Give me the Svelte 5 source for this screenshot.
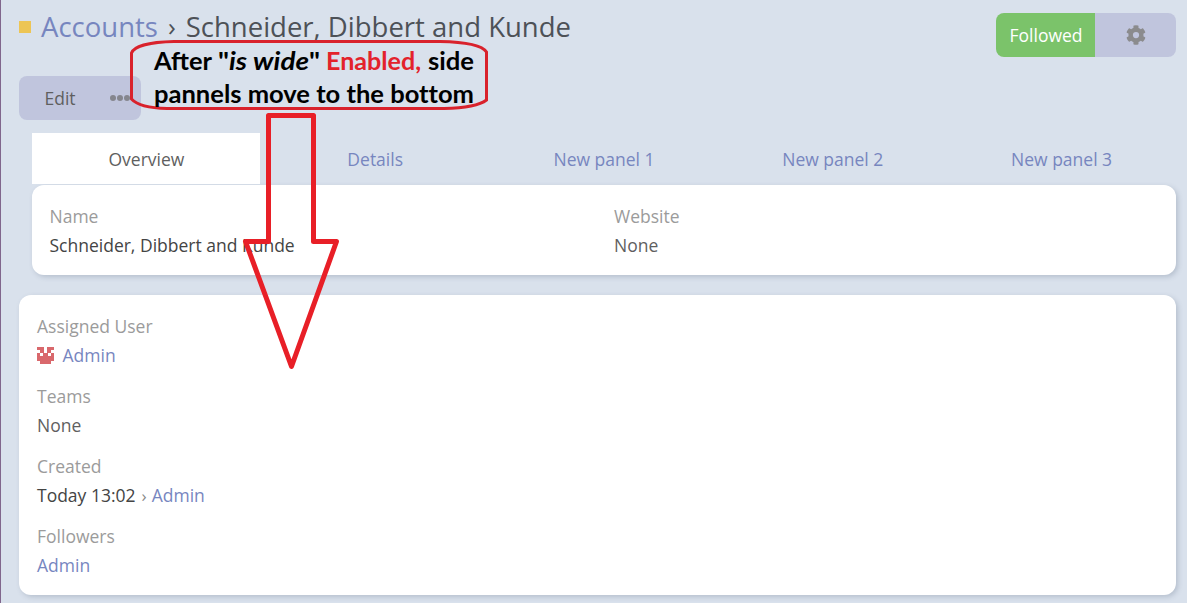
<script>
  const tabs = ['Overview', 'Details', 'New panel 1', 'New panel 2', 'New panel 3'];
  const avatar = [
    [0, 0, 7, 3], [10, 0, 7, 3], [3, 3, 4, 3], [10, 3, 4, 3],
    [0, 6, 3, 3], [6, 6, 5, 3], [14, 6, 3, 3], [0, 9, 17, 5], [3, 14, 11, 3]
  ];
</script>

<main>
  <header>
    <h1><i class="square"></i><a>Accounts</a><span class="chev">›</span><span class="title">Schneider, Dibbert and Kunde</span></h1>
    <div class="follow">
      <button class="followed"><span>Followed</span></button>
      <button class="gear" aria-label="Settings">
        <svg width="20" height="20" viewBox="0 0 512 512"><path fill="#8b8b8d" d="M487 316l-43-25a194 194 0 0 0 0-70l43-25c5-3 7-9 6-14-11-36-30-69-55-95-4-4-10-5-15-3l-43 25a191 191 0 0 0-60-35V24c0-6-4-11-10-12a246 246 0 0 0-110 0c-6 1-10 6-10 12v50a194 194 0 0 0-60 35L87 84c-5-3-11-2-15 3-25 26-44 59-55 95-2 5 1 11 6 14l43 25a194 194 0 0 0 0 70l-43 25c-5 3-7 9-6 14 11 36 30 69 55 95 4 4 10 5 15 3l43-25a191 191 0 0 0 60 35v50c0 6 4 11 10 12a246 246 0 0 0 110 0c6-1 10-6 10-12v-50a194 194 0 0 0 60-35l43 25c5 3 11 2 15-3 25-26 44-59 55-95 2-5-1-11-6-14zM256 336a80 80 0 1 1 0-160 80 80 0 0 1 0 160z"/></svg>
      </button>
    </div>
  </header>
  <div class="actions">
    <button class="edit"><span>Edit</span></button>
    <button class="more" aria-label="More"><i></i><i></i><i></i></button>
  </div>
  <section class="middle">
    <nav>
      {#each tabs as tab, i}<a class:active={i === 0}><span>{tab}</span></a>{/each}
    </nav>
    <div class="card overview">
      <div class="field"><label>Name</label><p class="dark"><span>Schneider, Dibbert and Kunde</span></p></div>
      <div class="field"><label>Website</label><p>None</p></div>
    </div>
  </section>
  <section class="card side">
    <div class="field"><label>Assigned User</label>
      <p><svg class="avatar" width="17" height="17" viewBox="0 0 17 17" shape-rendering="crispEdges">{#each avatar as [x, y, w, h]}<rect {x} {y} width={w} height={h} fill="#d9686c" />{/each}</svg><a>Admin</a></p></div>
    <div class="field"><label>Teams</label><p>None</p></div>
    <div class="field"><label>Created</label><p class="dark"><span>Today 13:02</span><small>›</small><a>Admin</a></p></div>
    <div class="field"><label>Followers</label><p><a>Admin</a></p></div>
  </section>
  <svg class="note" width="1187" height="603" viewBox="0 0 1187 603">
    <g fill="none" stroke="#d9222c" stroke-width="3">
      <path d="M174 41.500H440C465 42 482 45 486.500 52V100C480 105 465 108 444 108.500H167C148 108 136 104 131.500 99V53C134 46 151 42 174 41.500Z"/>
      <path stroke="#e81f27" stroke-width="5" stroke-linejoin="round" d="M268.500 115.500H313.500V241.500H336.500L291.500 366.500L245.500 241.500H268.500Z"/>
    </g>
    <g font-family="Lato, sans-serif" font-weight="700" font-size="24.500">
      <text x="154" y="70" textLength="58" lengthAdjust="spacingAndGlyphs">After</text>
      <text x="218" y="70" textLength="102" lengthAdjust="spacingAndGlyphs">"<tspan font-style="italic">is wide</tspan>"</text>
      <text x="326" y="70" textLength="95" lengthAdjust="spacingAndGlyphs" fill="#e3222b">Enabled,</text>
      <text x="428" y="70" textLength="46" lengthAdjust="spacingAndGlyphs">side</text>
      <text x="154" y="103" textLength="320" lengthAdjust="spacingAndGlyphs" style="font-variant-ligatures: none">pannels move to the bottom</text>
    </g>
  </svg>
</main>

<style>
  :global(body) { background: #d9e1ec; }
  main { position: relative; box-sizing: border-box; width: 1187px; height: 603px; overflow: hidden; padding: 13px 11px 8px 18px; border-left: 1px solid #80668c; background: #d9e1ec; font: 17.500px/29px "Open Sans", sans-serif; color: #5f5f5f; }
  a { color: #7786bf; }
  header { display: flex; justify-content: space-between; height: 44px; }
  h1 { display: flex; align-items: center; margin: 0; height: 27px; font-size: 27.500px; font-weight: 400; white-space: nowrap; color: #4d5157; }
  .square { width: 12px; height: 12px; margin-right: 10px; background: #edc555; }
  .chev { margin: 0 10px; font-size: 26px; }
  button { display: flex; align-items: center; justify-content: center; border: 0; padding: 0; background: #c0c5dd; font: inherit; color: #5f5f5f; }
  .follow { display: flex; width: 180px; height: 44px; border-radius: 8px; overflow: hidden; }
  .followed { width: 99px; background: #7bc36a; color: #fff; }
  .followed span { padding-left: 1px; }
  .gear { flex: 1; }
  .actions { display: flex; width: 122px; height: 44px; margin-top: 19px; border-radius: 8px; overflow: hidden; }
  .edit { width: 82px; }
  .more { flex: 1; gap: 1px; padding-right: 2px; }
  .more i { width: 6px; height: 6px; border-radius: 50%; background: #85868e; }
  .middle { margin: 12px 0 0 13px; }
  nav { display: flex; height: 53px; }
  nav a { flex: 1; height: 51px; display: flex; align-items: center; justify-content: center; padding: 1px 0 0 1px; margin: 1px 1px 0 0; box-sizing: border-box; }
  nav .active { background: #fff; color: #5f5f5f; }
  .card { box-sizing: border-box; background: #fff; border-radius: 12px; box-shadow: 2px 2px 5px rgba(80, 95, 120, .25); }
  .overview { display: flex; height: 90px; padding: 17px 0 17px 17.500px; }
  .overview .field { flex: 0 0 564.500px; }
  .overview .field:last-child { flex: 1; }
  .side { height: 300px; margin-top: 20px; padding: 17px 18px; }
  .side .field { height: 70px; }
  label { display: block; height: 29px; color: #9b9b9b; }
  p { display: flex; align-items: center; margin: 0; height: 29px; white-space: pre; }
  .dark { color: #444; }
  .avatar { margin-right: 8.500px; }
  small { margin: 0 5px 0 6px; font-size: 17px; color: #888; }
  .note { position: absolute; left: -1px; top: 0; pointer-events: none; }
</style>
